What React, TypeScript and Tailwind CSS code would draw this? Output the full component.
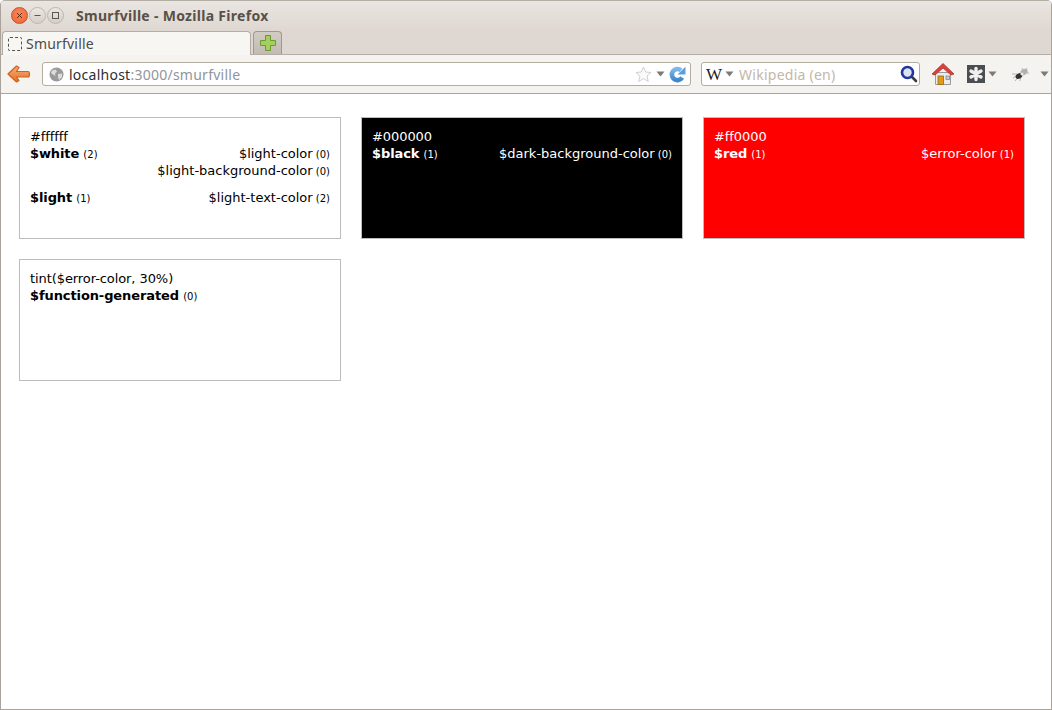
import React from "react";

const ui = "font-['Noto_Sans','Open_Sans',sans-serif]";

function Caret({ className = "" }: { className?: string }) {
  return (
    <svg width="9" height="6" viewBox="0 0 9 6" className={className}>
      <path d="M0.5 0.5H8.5L4.5 5.5Z" fill="#7d7a75" />
    </svg>
  );
}

function WinBtn({ kind }: { kind: "close" | "min" | "max" }) {
  const close = kind === "close";
  return (
    <div
      className={
        close
          ? "w-[17px] h-[17px] rounded-full flex items-center justify-center border border-[#c9512d] bg-[radial-gradient(circle_at_50%_40%,#f98b5f,#ec5f2e)]"
          : "w-[17px] h-[17px] rounded-full flex items-center justify-center border border-[#bdb6ad] bg-[linear-gradient(#ece8e3,#d4cec7)]"
      }
    >
      <svg width="9" height="9" viewBox="0 0 9 9" fill="none" stroke={close ? "#5a2a18" : "#5c5852"} strokeWidth="1">
        {kind === "close" && <path d="M2 2L7 7M7 2L2 7" />}
        {kind === "min" && <path d="M1.5 4.5H7.5" />}
        {kind === "max" && <rect x="1.5" y="1.5" width="6" height="6" />}
      </svg>
    </div>
  );
}

function BackArrow() {
  return (
    <svg width="24" height="20" viewBox="0 0 24 20">
      <defs>
        <linearGradient id="ba" x1="0" y1="0" x2="0" y2="1">
          <stop offset="0" stopColor="#f5b077" />
          <stop offset="1" stopColor="#e2702a" />
        </linearGradient>
      </defs>
      <path d="M9.5 2L1 10L9.5 18L12 16.5L9.5 13H21C23 13 23 7.5 21 7.5H9.5L12 3.5Z" fill="url(#ba)" stroke="#d2601f" strokeWidth="1.2" strokeLinejoin="round" />
    </svg>
  );
}

function Globe() {
  return (
    <svg width="15" height="15" viewBox="0 0 15 15">
      <circle cx="7.5" cy="7.5" r="7" fill="#9a9a9a" />
      <path d="M3 3.5L6.5 2.5L8 4.5L6 6.5L6.5 9L4 7.5L2 6ZM9 7L13 6.5L13 10L10 13L9 10Z" fill="#dcdcdc" />
    </svg>
  );
}

function Star() {
  return (
    <svg width="17" height="17" viewBox="0 0 17 17">
      <path d="M8.5 1L10.7 6L16 6.5L12 10L13.3 15.5L8.5 12.6L3.7 15.5L5 10L1 6.5L6.3 6Z" fill="#fbfbfb" stroke="#cfcfcf" strokeWidth="1" strokeLinejoin="round" />
    </svg>
  );
}

function Reload() {
  return (
    <svg width="17" height="17" viewBox="0 0 17 17">
      <defs>
        <linearGradient id="rl" x1="0" y1="0" x2="0" y2="1">
          <stop offset="0" stopColor="#7db8e8" />
          <stop offset="1" stopColor="#3f86ca" />
        </linearGradient>
      </defs>
      <path d="M13.2 11.6A5.6 5.6 0 1 1 12 4.2" fill="none" stroke="url(#rl)" strokeWidth="4.6" />
      <path d="M16.5 0.8V8.5H8.5Z" fill="#5c9fd9" />
    </svg>
  );
}

function Search() {
  return (
    <svg width="18" height="18" viewBox="0 0 18 18">
      <path d="M11.5 11.5L16 16" stroke="#3b3b3b" strokeWidth="2.6" strokeLinecap="round" />
      <circle cx="7.5" cy="7.5" r="5.5" fill="#dbe4f5" stroke="#23379a" strokeWidth="2.6" />
    </svg>
  );
}

function Home() {
  return (
    <svg width="24" height="24" viewBox="0 0 24 24">
      <path d="M4.5 10.5H19.5V22.5H4.5Z" fill="#ececec" stroke="#9a9a9a" strokeWidth="1" />
      <path d="M1 12L12 1.5L23 12L20 13L12 6L4 13Z" fill="#d9423b" stroke="#b0342e" strokeWidth="0.8" strokeLinejoin="round" />
      <rect x="7" y="14" width="5.5" height="8.5" fill="#e09a1c" stroke="#9c6a10" strokeWidth="0.8" />
      <rect x="15" y="14" width="3.5" height="3.5" fill="#c4ccd4" stroke="#888" strokeWidth="0.8" />
    </svg>
  );
}

function Ext() {
  return (
    <svg width="18" height="18" viewBox="0 0 18 18">
      <rect width="18" height="18" fill="#4b4e50" />
      <path d="M9 3.5V14.5M4 6L14 12M14 6L4 12" stroke="#f0f0f0" strokeWidth="3.4" strokeLinecap="round" />
    </svg>
  );
}

function Bug() {
  return (
    <svg width="20" height="16" viewBox="0 0 20 16">
      <path d="M2 12L7 9M4 15L8 10M9 15L10 9M11 2L12 6M16 2L14 6M18 7L13 7M1 8L6 8" stroke="#b5b5b5" strokeWidth="1" />
      <ellipse cx="8" cy="10" rx="3.6" ry="2.6" fill="#333" transform="rotate(-30 8 10)" />
      <ellipse cx="13" cy="6" rx="3.8" ry="2.8" fill="#b0b0b0" transform="rotate(-30 13 6)" />
      <circle cx="11" cy="8" r="1.5" fill="#e8e8e8" />
    </svg>
  );
}

type Row = { name: string; count: number; aliases: [string, number][] };
type Color = { title: string; box: string; rows: Row[] };

const colors: Color[] = [
  {
    title: "#ffffff",
    box: "bg-white text-black",
    rows: [
      { name: "$white", count: 2, aliases: [["$light-color", 0], ["$light-background-color", 0]] },
      { name: "$light", count: 1, aliases: [["$light-text-color", 2]] },
    ],
  },
  {
    title: "#000000",
    box: "bg-black text-white",
    rows: [{ name: "$black", count: 1, aliases: [["$dark-background-color", 0]] }],
  },
  {
    title: "#ff0000",
    box: "bg-[#ff0000] text-white",
    rows: [{ name: "$red", count: 1, aliases: [["$error-color", 1]] }],
  },
  {
    title: "tint($error-color, 30%)",
    box: "bg-white text-black",
    rows: [{ name: "$function-generated", count: 0, aliases: [] }],
  },
];

function Card({ c }: { c: Color }) {
  return (
    <div className={"h-[122px] border border-[#bdbdbd] px-[10px] pt-[10px] text-[13px] leading-[17px] " + c.box}>
      <div className="tracking-[-0.08px]">{c.title}</div>
      {c.rows.map((r) => (
        <div key={r.name} className="flex justify-between mb-[10px]">
          <div>
            <span className="font-bold tracking-[-0.1px]">{r.name}</span>{" "}
            <span className="text-[10px] leading-none">({r.count})</span>
          </div>
          <div className="text-right">
            {r.aliases.map(([a, n]) => (
              <div key={a}>
                {a} <span className="text-[10px] leading-none -ml-px">({n})</span>
              </div>
            ))}
          </div>
        </div>
      ))}
    </div>
  );
}

export default function App() {
  return (
    <div className="w-[1052px] h-[710px] overflow-hidden bg-white border-x border-b border-[#a9a39b] rounded-t-[5px] font-['DejaVu_Sans',sans-serif] relative">
      {/* title bar */}
      <div className="h-[30px] flex items-center pl-[10px] bg-[linear-gradient(#e9e5e0,#dfd8d2)] border-t border-[#b5aea6]">
        <div className="flex gap-[1px]">
          <WinBtn kind="close" />
          <WinBtn kind="min" />
          <WinBtn kind="max" />
        </div>
        <div className={"ml-[12px] text-[14px] font-bold text-[#5a5047] tracking-[0.3px] " + ui}>Smurfville - Mozilla Firefox</div>
      </div>
      {/* tab strip */}
      <div className="h-[25px] flex items-end bg-[#dfd8d2] pl-[1px] border-b border-[#b5aea6]">
        <div className="w-[249px] h-[24px] -mb-px flex items-center gap-[4px] pl-[5px] rounded-t-[4px] bg-[#f7f6f3] border border-b-0 border-[#b3aca4]">
          <div className="w-[14px] h-[14px] border border-dashed border-[#55524e] rounded-[2px]" />
          <span className={"text-[14px] text-[#4c4a46] tracking-[0.2px] " + ui}>Smurfville</span>
        </div>
        <div className="ml-[2px] w-[29px] h-[23px] flex items-center justify-center rounded-t-[4px] bg-[linear-gradient(#d3ccc5,#c2bbb4)] border border-b-0 border-[#9e9890]">
          <svg width="18" height="18" viewBox="0 0 18 18">
            <path d="M6.5 1.5H11.5V6.5H16.5V11.5H11.5V16.5H6.5V11.5H1.5V6.5H6.5Z" fill="#a4cf5c" stroke="#6d9a2e" strokeWidth="1" />
          </svg>
        </div>
      </div>
      {/* nav bar */}
      <div className="h-[39px] flex items-center bg-[#f5f3f0] border-b border-[#aba49b] pl-[6px]">
        <BackArrow />
        <div className="ml-[11px] w-[649px] h-[24px] flex items-center pl-[6px] pr-[4px] bg-white rounded-[3px] border border-[#b3aca0]">
          <Globe />
          <span className={"ml-[5px] text-[14px] text-[#2f2f2f] tracking-[0.25px] " + ui}>
            localhost<span className="text-[#8f959b]">:3000/smurfville</span>
          </span>
          <div className="ml-auto flex items-center gap-[4px]">
            <Star />
            <Caret />
            <Reload />
          </div>
        </div>
        <div className="ml-[10px] w-[219px] h-[24px] flex items-center pl-[4px] pr-[1px] bg-white rounded-[3px] border border-[#b3aca0]">
          <span className="font-['Liberation_Serif',serif] text-[17px] text-[#222] leading-none">W</span>
          <Caret className="ml-[3px]" />
          <span className={"ml-[5px] text-[14px] text-[#c4b7a8] tracking-[0.25px] " + ui}>Wikipedia (en)</span>
          <div className="ml-auto flex">
            <Search />
          </div>
        </div>
        <div className="ml-[11px]">
          <Home />
        </div>
        <div className="ml-[12px]">
          <Ext />
        </div>
        <Caret className="ml-[3px]" />
        <div className="ml-[14px]">
          <Bug />
        </div>
        <Caret className="ml-[9px]" />
      </div>
      {/* page */}
      <div className="grid grid-cols-[322px_322px_322px] gap-5 pl-[18px] pt-[23px]">
        {colors.map((c) => (
          <Card key={c.title} c={c} />
        ))}
      </div>
    </div>
  );
}
